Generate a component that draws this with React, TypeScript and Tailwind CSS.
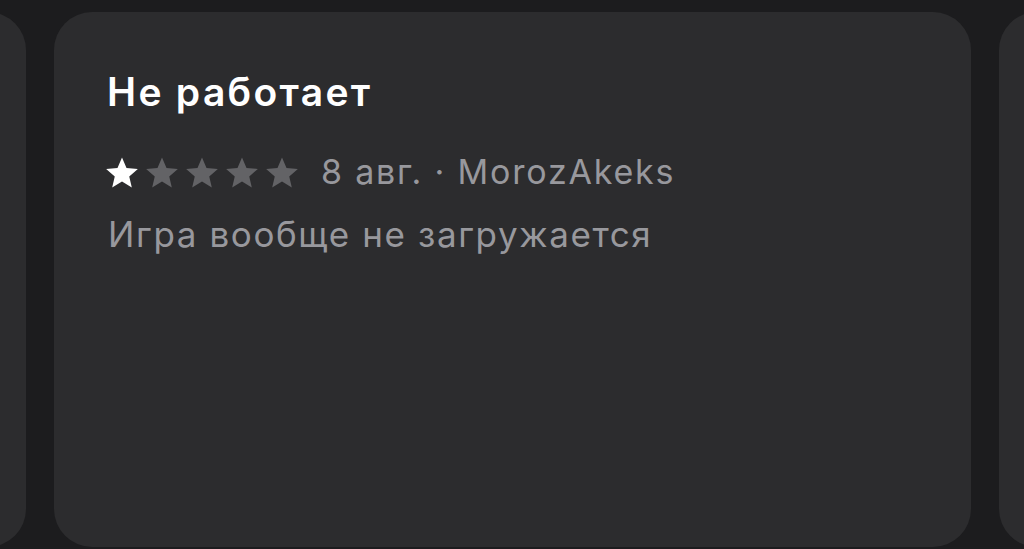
import React from "react";

const Star = ({ color }: { color: string }) => (
  <svg width="32" height="31" viewBox="1 1.2 22 21.3" className="shrink-0">
    <path
      d="M12 1.5l3.1 7.2 7.8.7-5.92 5.13 1.77 7.64L12 18.1l-6.75 4.07 1.77-7.64L1.1 9.4l7.8-.7z"
      fill={color}
    />
  </svg>
);

export default function App() {
  return (
    <div
      className="w-[1024px] h-[549px] bg-[#1c1c1e] overflow-hidden flex gap-[28px] pt-[12px]"
      style={{ fontFamily: "Inter, 'Noto Sans', sans-serif" }}
    >
      <div className="shrink-0 w-[917px] h-[535px] -ml-[891px] rounded-[38px] bg-[#2c2c2e]" />
      <div className="shrink-0 w-[917px] h-[535px] rounded-[38px] bg-[#2c2c2e] pl-[54px] pt-[58px]">
        <div className="text-[39px] leading-[44px] font-semibold text-white tracking-[2.3px] -ml-[1px]">
          Не работает
        </div>
        <div className="flex items-center mt-[38px] h-[40px]">
          <div className="flex gap-[8px] -ml-[2px]">
            <Star color="#ffffff" />
            <Star color="#636366" />
            <Star color="#636366" />
            <Star color="#636366" />
            <Star color="#636366" />
          </div>
          <span className="ml-[23px] text-[34px] leading-[40px] text-[#98989d] tracking-[1.8px]">
            8 авг. · MorozAkeks
          </span>
        </div>
        <div className="mt-[21px] text-[35px] leading-[42px] text-[#98989d] tracking-[1.6px]">
          Игра вообще не загружается
        </div>
      </div>
      <div className="shrink-0 w-[917px] h-[535px] rounded-[38px] bg-[#2c2c2e]" />
    </div>
  );
}
